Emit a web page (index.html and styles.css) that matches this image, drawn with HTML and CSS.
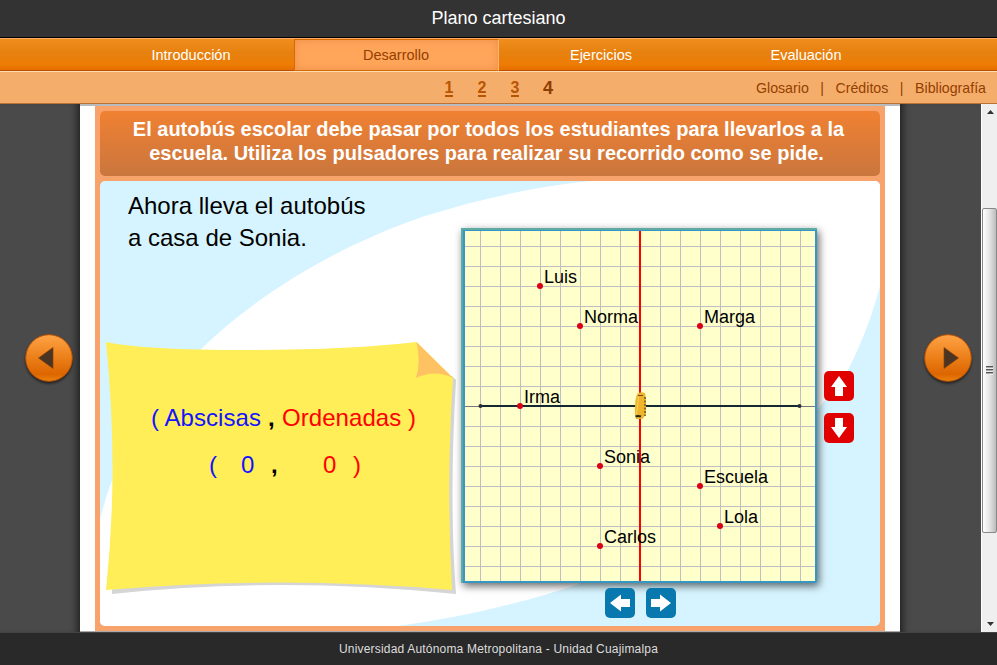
FILE: index.html
```html
<!DOCTYPE html>
<html lang="es">
<head>
<meta charset="utf-8">
<title>Plano cartesiano</title>
<link rel="stylesheet" href="styles.css">
</head>
<body>
<header class="title">Plano cartesiano</header>
<nav class="tabs">
  <a class="tab">Introducción</a>
  <a class="tab active">Desarrollo</a>
  <a class="tab">Ejercicios</a>
  <a class="tab">Evaluación</a>
</nav>
<nav class="subnav">
  <span></span>
  <div class="pages"><a>1</a><a>2</a><a>3</a><b>4</b></div>
  <div class="links"><a>Glosario</a><i>|</i><a>Créditos</a><i>|</i><a>Bibliografía</a></div>
</nav>
<main class="stage">
  <aside class="side left">
    <svg class="round" width="54" height="54" viewBox="0 0 54 54"><defs><linearGradient id="ball" x2="0" y2="1"><stop stop-color="#ffa346"/><stop offset=".5" stop-color="#eb7f19"/><stop offset=".85" stop-color="#dc6500"/><stop offset="1" stop-color="#ed850d"/></linearGradient></defs><circle cx="27" cy="27" r="23.3" fill="url(#ball)" stroke="#b75208"/><path d="M16.500 27 31 16.500V37.500Z" fill="#4a3423" stroke="#8b4308" stroke-width=".7"/></svg>
  </aside>
  <section class="sheet">
    <div class="frame">
      <h1><span>El autobús escolar debe pasar por todos los estudiantes para llevarlos a la</span><span class="second">escuela. Utiliza los pulsadores para realizar su recorrido como se pide.</span></h1>
      <div class="panel">
        <svg class="scene" width="780" height="445" viewBox="100 181 780 445"><path d="M100 520C116 452 152 396 200 350C255 296 335 247 422 217C475 200 535 186 600 180H880V286C872 316 861 345 848 370C785 462 660 556 582 583C520 604 455 619 390 627H100Z" fill="#fff"/></svg>
        <div class="lesson">
          <p class="task">Ahora lleva el autobús<br>a casa de Sonia.</p>
          <div class="note">
            <svg class="paper" width="360" height="260" viewBox="100 338 360 260"><path d="M112 594Q280 576 456 594Q449 500 456 380L452 376L400 390L112 580Z" fill="#d5d5d5"/><path d="M106 342Q145 350 245 350Q350 350 416.500 342L453 378Q446 480 452 590Q280 575 106 590Q119 470 106 342Z" fill="#ffee57"/><path d="M416.500 342L453 378Q435 369 416 378Q421 362 416.500 342Z" fill="#ffc262"/></svg>
            <svg class="coords" width="360" height="260" viewBox="100 338 360 260"><g font-size="24"><text x="151" y="426" textLength="110" lengthAdjust="spacing" fill="#1414ff">( Abscisas</text><text x="268" y="426" font-weight="bold">,</text><text x="282" y="426" textLength="134" lengthAdjust="spacing" fill="#f00">Ordenadas )</text><text x="209" y="473" fill="#1414ff">(</text><text x="241" y="473" fill="#1414ff">0</text><text x="271" y="473" font-weight="bold">,</text><text x="323" y="473" fill="#f00">0</text><text x="353" y="473" fill="#f00">)</text></g></svg>
          </div>
        </div>
        <div class="plane">
          <svg class="board" width="356" height="355" viewBox="461 228 356 355"><defs><pattern id="grid" x="480" y="246" width="20" height="20" patternUnits="userSpaceOnUse"><path d="M.5 0V20M0 .5H20" stroke="#bfbfc2"/></pattern></defs><rect x="461" y="228" width="356" height="355" rx="1" fill="#3697c5"/><path d="M462 583V229H817" fill="none" stroke="#60aaa5" stroke-width="2"/><rect x="465" y="231" width="350" height="350" fill="#ffffcb"/><rect x="465" y="231" width="350" height="350" fill="url(#grid)"/><path d="M465 406.500H815" stroke="#777781"/><path d="M480 406H800" stroke="#152733" stroke-width="2"/><circle cx="480.500" cy="406" r="2" fill="#273039"/><circle cx="799.500" cy="406" r="2" fill="#273039"/><path d="M640 231V581" stroke="#f00" stroke-width="2"/>
          <g fill="#dc0017"><circle cx="540" cy="286" r="3"/><circle cx="580" cy="326" r="3"/><circle cx="700" cy="326" r="3"/><circle cx="520" cy="406" r="3"/><circle cx="600" cy="466" r="3"/><circle cx="700" cy="486" r="3"/><circle cx="720" cy="526" r="3"/><circle cx="600" cy="546" r="3"/></g>
          <g font-size="18"><text x="544" y="283">Luis</text><text x="584" y="323">Norma</text><text x="704" y="323">Marga</text><text x="524" y="403">Irma</text><text x="604" y="463">Sonia</text><text x="704" y="483">Escuela</text><text x="724" y="523">Lola</text><text x="604" y="543">Carlos</text></g>
          <path d="M637 394Q641 391 645 393.500L646 398V414L642.500 419H636Q634 411 635.500 400Z" fill="#eeb42c"/><path d="M638.500 397L636.500 414" stroke="#ffd260"/><path d="M638 395.500H643" stroke="#6a5124"/><path d="M635.500 416.500Q638 415.500 641 416.500" fill="none" stroke="#252719" stroke-width="2"/><path d="M645 397V416" stroke="#80632b" stroke-width="1.800" stroke-dasharray="2 1.500"/></svg>
          <div class="horizontal"><button aria-label="Izquierda"><svg width="30" height="30"><path d="M5 15L16 6.500V11H25V19H16V23.500Z" fill="#fff"/></svg></button><button aria-label="Derecha"><svg width="30" height="30"><path d="M25 15L14 6.500V11H5V19H14V23.500Z" fill="#fff"/></svg></button></div>
        </div>
        <div class="vertical"><button aria-label="Arriba"><svg width="30" height="30"><path d="M15 5L23 16H19V25H11V16H7Z" fill="#fff"/></svg></button><button aria-label="Abajo"><svg width="30" height="30"><path d="M15 25L23 14H19V5H11V14H7Z" fill="#fff"/></svg></button></div>
      </div>
    </div>
  </section>
  <aside class="side right">
    <svg class="round" width="54" height="54" viewBox="0 0 54 54"><circle cx="27" cy="27" r="23.300" fill="url(#ball)" stroke="#b75208"/><path d="M37.500 27 23 16.500V37.500Z" fill="#4a3423" stroke="#8b4308" stroke-width=".7"/></svg>
  </aside>
  <div class="scroll"><svg width="16" height="7"><path d="M5 5L8.500 1L12 5Z" fill="#333"/></svg><div class="thumb"><span></span></div><svg class="down" width="16" height="7"><path d="M5 1H12L8.500 5Z" fill="#333"/></svg></div>
</main>
<footer>Universidad Autónoma Metropolitana - Unidad Cuajimalpa</footer>
</body>
</html>
```
FILE: styles.css
```css
* { box-sizing: border-box; }
body { margin: 0; height: 665px; overflow: hidden; display: flex; flex-direction: column; font-family: "Liberation Sans", Arial, sans-serif; color: #000; background: #4a4a4a; }
svg { display: block; }
.title { height: 38px; flex: none; background: #333; border-bottom: 1px solid #000; color: #fff; text-align: center; font-size: 18px; line-height: 36px; }
.tabs { height: 33px; flex: none; display: grid; grid-template-columns: repeat(4, 205px); justify-content: center; background: linear-gradient(#f18d1c, #e68110 45%, #ee7d05 80%, #e66e00); border-top: 1px solid #ffad66; border-bottom: 1px solid #bc4f00; }
.tab { color: #fff; font-size: 14.5px; line-height: 32px; text-align: center; }
.tab.active { color: #944000; background: #ffa65b; border: 1px solid #d66b05; border-right-color: #ffb675; line-height: 30px; box-shadow: inset 0 0 8px #ed8d48; }
.subnav { height: 33px; flex: none; display: grid; grid-template-columns: 1fr 132px 1fr; align-items: center; background: #f5ad6b; border-top: 1px solid #ffdcae; border-bottom: 1px solid #bc7136; font-size: 16px; line-height: 16px; }
.pages { display: grid; grid-template-columns: repeat(4, 33px); text-align: center; align-items: center; color: #b95500; font-weight: bold; }
.pages a { justify-self: center; border-bottom: 2px solid #b95500; line-height: 17px; height: 18px; }
.pages b { color: #8d3e00; font-size: 18px; }
.links { justify-self: end; display: flex; gap: 11.5px; padding-right: 11px; color: #944000; font-size: 14.2px; }
.links i { font-style: normal; }
.stage { flex: none; height: 528px; display: grid; grid-template-columns: 80px 820px 81px 16px; background: #4a4a4a; border-bottom: 1px solid #333; }
.side { background: #4a4a4a; }
.left { box-shadow: inset -8px 0 7px -5px #222; padding: 227px 0 0 22px; }
.right { box-shadow: inset 8px 0 7px -5px #222; padding: 227px 0 0 21px; }
.round { filter: drop-shadow(0 2px 1px #242424); }
.sheet { background: #fff; border-top: 2px solid #b7bbc0; border-bottom: 1px solid #aaa; padding: 0 15px; height: 528px; }
.frame { height: 525px; background: #f7a36b; padding: 5px; }
h1 { margin: 0 0 5px; height: 65px; padding: 6px 3px 0 0; border-radius: 5px; background: linear-gradient(#f08132, #ca763e); color: #fff; text-align: center; font-size: 20px; line-height: 24px; white-space: nowrap; }
h1 span { display: block; }
h1 .second { padding-right: 4px; }
.panel { height: 445px; border-radius: 5px; overflow: hidden; background: #d6f4ff; display: grid; grid-template-columns: 361px 357px 62px; position: relative; }
.scene { position: absolute; inset: 0; }
.lesson { position: relative; }
.task { margin: 0; padding: 9px 0 0 28px; font-size: 24px; line-height: 32px; height: 157px; }
.note { position: relative; height: 260px; }
.paper, .coords { position: absolute; inset: 0; }
.plane { position: relative; padding-top: 47px; }
.board { box-shadow: 2px 3px 8px #0009; }
.horizontal { display: flex; gap: 11px; padding: 5px 0 0 144px; }
.vertical { position: relative; display: flex; flex-direction: column; gap: 12px; padding: 190px 0 0 6px; }
button { width: 30px; height: 30px; border: 0; padding: 0; border-radius: 5px; background: #0879ae; }
.vertical button { background: #e00000; }
.scroll { background: #efefef; border-left: 1px solid #fff; display: flex; flex-direction: column; padding-top: 5px; height: 528px; }
.thumb { margin-top: 92px; height: 325px; flex: none; border: 1px solid #888; border-radius: 2px; background: linear-gradient(90deg, #fff, #e8e8e8 45%, #bcbcbf); display: grid; place-items: center; }
.thumb span { width: 7px; height: 9px; background: repeating-linear-gradient(#555 0 1px, #aaa 1px 2px, #eee 2px 3px); }
.scroll .down { margin-top: 88px; }
footer { flex: 1; background: #292929; border-top: 1px solid #444; color: #dedede; text-align: center; font-size: 12px; letter-spacing: .19px; line-height: 32px; }
```
